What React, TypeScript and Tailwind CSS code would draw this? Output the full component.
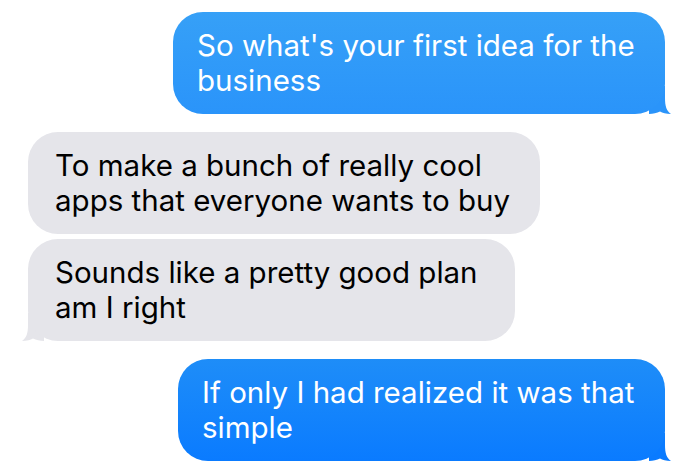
import React from 'react';

type Side = 'left' | 'right';

function Tail({ side, color }: { side: Side; color: string }) {
  const right = side === 'right';
  return (
    <svg
      width="22"
      height="28"
      viewBox="0 0 22 28"
      className={right ? 'absolute -right-[6px] bottom-0' : 'absolute -left-[6px] bottom-0 -scale-x-100'}
      aria-hidden
    >
      <path d="M0 0 H16 V12 C16 20 17.5 25 22 28 C17 28 13.5 27 11 25.5 C8 27 4 28 0 28 Z" fill={color} />
    </svg>
  );
}

function Bubble({
  side,
  text,
  width,
  className,
  tail,
}: {
  side: Side;
  text: string[];
  width: string;
  className: string;
  tail?: string;
}) {
  return (
    <div className={`relative ${width} ${side === 'right' ? 'self-end' : 'self-start'}`}>
      <div className={`relative z-10 rounded-[30px] text-[29.5px] leading-[35px] ${className}`}>
        {text.map((t) => (
          <div key={t} className="whitespace-nowrap">
            {t}
          </div>
        ))}
      </div>
      {tail && (
        <div className="absolute inset-0">
          <Tail side={side} color={tail} />
        </div>
      )}
    </div>
  );
}

export default function App() {
  return (
    <div
      className="flex h-[471px] w-[700px] flex-col overflow-hidden bg-white pt-[12px]"
      style={{ fontFamily: 'Inter, "Liberation Sans", sans-serif' }}
    >
      <div className="mr-[35px] flex flex-col">
        <Bubble
          side="right"
          width="w-[492px]"
          className="bg-gradient-to-b from-[#36a0f7] to-[#2a94fa] py-[16px] pl-[24px] text-white"
          text={["So what's your first idea for the", 'business']}
          tail="#2a94fa"
        />
      </div>

      <div className="ml-[28px] mt-[18px] flex flex-col gap-[5px]">
        <Bubble
          side="left"
          width="w-[512px]"
          className="bg-[#e5e5ea] py-[16px] pl-[27px] text-black"
          text={['To make a bunch of really cool', 'apps that everyone wants to buy']}
        />
        <Bubble
          side="left"
          width="w-[487px]"
          className="bg-[#e5e5ea] py-[16px] pl-[27px] text-black"
          text={['Sounds like a pretty good plan', 'am I right']}
          tail="#e5e5ea"
        />
      </div>

      <div className="mr-[35px] mt-[18px] flex flex-col">
        <Bubble
          side="right"
          width="w-[487px]"
          className="bg-gradient-to-b from-[#1e8df8] to-[#0a7bff] py-[16px] pl-[24px] text-white"
          text={['If only I had realized it was that', 'simple']}
          tail="#0a7bff"
        />
      </div>
    </div>
  );
}
